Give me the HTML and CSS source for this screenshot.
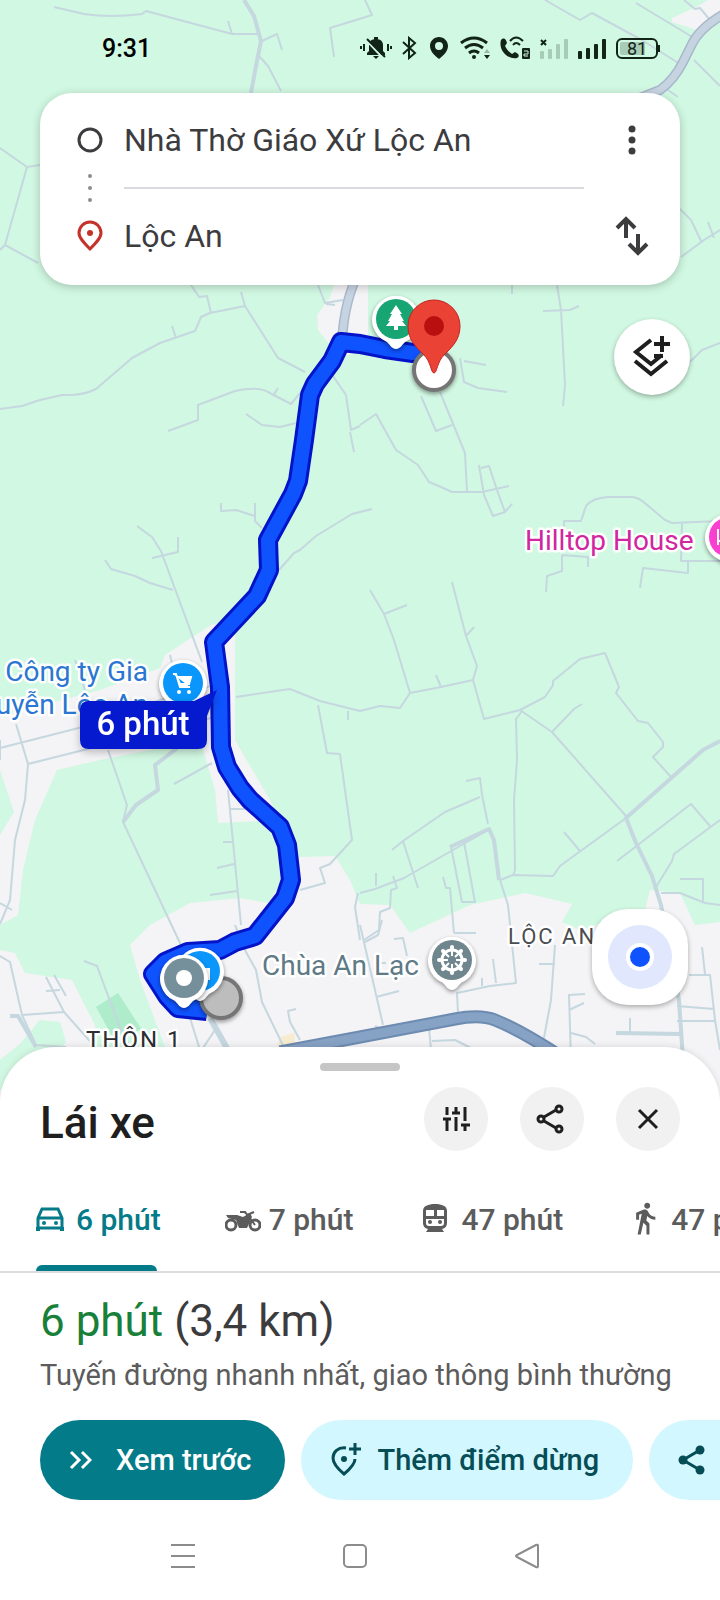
FILE: index.html
```html
<!DOCTYPE html>
<html lang="vi">
<head>
    <meta charset="UTF-8" />
    <meta name="viewport" content="width=device-width, initial-scale=1" />
    <title>Lái xe đến Lộc An</title>
    <link rel="stylesheet" href="styles.css">
</head>
<body>
<div class="app">
    <svg class="map" viewBox="0 0 720 1110" role="img" aria-label="Bản đồ tuyến đường">
        <defs>
            <path id="pin" d="M0 30C-4 30-6 26-9 23A24 24 0 1 1 9 23C6 26 4 30 0 30Z" />
        </defs>
        <rect class="land" width="720" height="1110" />

        <!-- built-up areas -->
        <g class="urban">
            <path d="M672 18L700 5 708 0H720V20L700 31 672 22Z" />
            <path d="M336 280L330 297 317 315 318 330 330 345 340 356 368 352V280Z" />
            <path d="M211 625L165 655 160 668 100 690 0 716V770L14 812 0 835V925L18 915 23 870 35 820 57 770 100 760 200 740 215 790 218 823 280 820 270 800 235 740V620Z" />
            <path d="M0 950L15 953 25 973 72 980 95 1025 104 1110H0Z" />
            <path d="M130 945L150 925 190 903 240 898 268 903 298 857 335 856 350 880 360 904 390 905 410 933 470 905 525 893 572 904 562 922 580 930 645 910 650 890 680 893 695 925 720 922V1110H175L165 1047 140 980Z" />
        </g>
        <path class="land" d="M20 1044L40 1020 60 1022 66 1042 50 1060 0 1090V1060Z" />
        <path class="park" d="M96 1007L118 993 142 1030 112 1036Z" />
        <path class="square" d="M280 1037L294 1033 296 1050H276Z" />

        <!-- small roads -->
        <g class="road">
            <path d="M54 7L84 14Q110 18 142 14L146 11 232 34 258 34M228 21L232 34M262 41L277 34 282 50M259 56L268 66 281 91M334 57L330 28 372 15 365 0" />
            <path d="M0 148L27 167 40 165M27 167L5 245 38 263M5 245L0 250" />
            <path d="M545 0L580 20 592 13 640 39 680 64M636 3L694 38M694 60L720 86M684 0L695 9 700 8 710 20M665 88L678 97M678 207L691 220 702 243M681 257L704 240 720 230M708 222L714 238" />
            <path d="M191 285L199 297 207 296 211 313M241 292L245 306 210 313 201 317 195 331 160 343 132 358 96 389Q82 396 62 395L40 400 22 406 0 409M172 326L176 338M245 306L278 358 305 372M318 285L325 303 343 300M326 304L335 305" />
            <path d="M168 431L198 420V405L235 391Q258 386 268 392L291 404 300 393M278 388L273 396M246 414L262 425 280 427 296 423M333 376L346 395 351 430 360 426M350 432L354 452" />
            <path d="M221 503V511L236 510 255 516M255 503V521L262 528M279 570L294 553 300 550 316 536 352 514 372 509M137 526L152 537 161 551 202 662M152 558L178 552V537M105 560L111 569 135 576 150 583 173 590" />
            <path d="M557 285L561 310 565 385 563 406M543 311L570 310 579 306M512 285V294M460 358L464 382 478 388 507 392M464 361L486 365M421 396L436 431 452 425M440 392L465 453 467 492M360 425L376 414 396 450 418 465 429 482 441 487 452 492 482 492 509 486M479 465L484 495 493 516 505 512 497 490 489 466 481 468M505 512L512 504" />
            <path d="M564 535V521H581L586 506Q592 498 608 497H632Q640 498 646 504L665 520 672 523 720 521M682 523L681 561H720M562 555V571L547 576 546 592M562 555L588 557V567M688 562V573L643 568 640 588M690 362L702 350 720 343" />
            <path d="M370 590L384 614 394 640 410 693 400 708 380 706 360 711 320 701 290 689 236 697M384 614L407 605M452 582L466 636 477 666 473 680 484 719 520 710M466 636L474 627M436 675L441 687 473 680M410 693L441 687M520 710L545 697 553 685V681L580 659 605 653 619 687 616 693 638 721 648 723 663 742V747L653 757 671 777M522 711L516 719 517 760 514 800 515 870 513 876M520 710L552 732 626 816M552 732L574 709 582 704" />
            <path d="M626 818L560 866 553 876 513 875 500 880M564 832L580 851M617 861L691 804 710 826M720 820L674 854 672 861 656 887M661 893L680 893 705 903 720 905M680 879H703V902" />
            <path d="M466 781L480 778 482 795 488 824M360 893L375 889 404 878 488 830M392 850L403 841 445 812 480 797M403 841L418 888M376 873V886M393 876L397 888 391 890 390 908 380 912 379 930 364 940M443 877L446 888H450L454 933M451 847L462 902H475L464 842M454 933H476M500 880L508 905 516 983 490 986 457 993 458 1014" />
            <path d="M318 705L327 753 340 754 352 840 330 864 320 868 325 883 300 890M348 711V720M358 893L355 907 360 940M228 790L241 925M229 809H246M223 842H232M217 868L234 864M210 895L237 891" />
            <path d="M0 748L110 720 160 700 215 685M28 764L215 717M16 724L28 764 25 800 15 840 10 900 0 924M108 750L127 805 123 822 180 943 200 990M174 784L212 763M0 740V760M0 903L12 910M163 678L200 670M170 655L174 672M75 660L85 690" />
            <path d="M84 961L97 966 120 1028 165 1110M0 956L10 962 22 1015 36 1045 66 1047M22 1015L64 1012M64 1012L46 977M66 996L54 975M60 990L46 991M64 1012L95 1047M235 925L246 952 256 970 262 1002 290 1060M296 1009L288 1011 290 1022 300 1040M190 1018L200 1050M203 1048L215 1030" />
            <path d="M360 925L383 1025M365 942L378 935 382 920M376 997L399 991M383 1030L375 1026M394 939L403 938 407 956M380 963H386M493 959L496 983M482 978V986M555 945L551 1000 543 1043M539 964H555M429 1028L432 1060M432 1041L455 1040 475 1050M571 1060L569 995 585 994M569 1010L584 1003M571 1033L586 1037 595 1044M702 947L705 974M689 975H710L715 1020 720 1050M677 1006L714 1009M677 1021H716M630 1018V1033" />
        </g>
        <g class="road wide">
            <path d="M720 741L703 750 626 818 636 843 652 876 661 905 672 960 679 1000 683 1060M616 1033L680 1034M450 847L489 829 494 840 499 880M180 746L155 765 158 790 136 805 123 822M244 0L254 16 261 41 256 66 251 93M10 1016L18 1016 36 1047" />
            <path d="M210 1018L228 1050" stroke-width="6" />
        </g>
        <g fill="none">
            <path class="street-edge" d="M724 14Q700 28 692 44L683 62Q674 80 660 90L640 98M360 270Q344 300 342 342" />
            <path class="street" d="M724 14Q700 28 692 44L683 62Q674 80 660 90L640 98M360 270Q344 300 342 342" />
            <path class="highway-edge" d="M280 1052L360 1037 455 1019Q480 1014 495 1020 520 1030 560 1056" />
            <path class="highway" d="M280 1052L360 1037 455 1019Q480 1014 495 1020 520 1030 560 1056" />
        </g>

        <!-- places under the route callout -->
        <g class="place shop">
            <text x="148" y="681" text-anchor="end">Công ty Gia</text>
            <text x="148" y="714" text-anchor="end">Nguyễn Lộc An</text>
        </g>

        <!-- route -->
        <path class="route-edge" d="M430 354L413 353 385 349 360 344 341 342 332 361 315 384 310 395 304 440 298 481 293 494 268 540 269 570 257 596 214 642 220 687 221 747 227 767 240 788 250 800 280 827 287 845 291 880 285 898 255 936 235 942 220 950 188 952 165 962 153 974 167 996 178 1008 207 1011" />
        <path class="route" d="M430 354L413 353 385 349 360 344 341 342 332 361 315 384 310 395 304 440 298 481 293 494 268 540 269 570 257 596 214 642 220 687 221 747 227 767 240 788 250 800 280 827 287 845 291 880 285 898 255 936 235 942 220 950 188 952 165 962 153 974 167 996 178 1008 207 1011" />
        <path d="M188 952L165 962 153 974 167 996 178 1008 207 1011 222 950Z" fill="#0f53ff" />

        <!-- pins -->
        <g class="pin" transform="translate(183 683)">
            <use href="#pin" />
            <circle r="20" fill="#0b96fb" />
            <path d="M-10-9H-7L-3 4H7M-6-6H8L6 1H-3Z" fill="#fff" stroke="#fff" stroke-width="2" />
            <circle cx="-4" cy="9" r="2" fill="#fff" /><circle cx="6" cy="9" r="2" fill="#fff" />
        </g>
        <circle class="stop start" cx="221" cy="998" r="20" />
        <g class="pin" transform="translate(200 971)">
            <use href="#pin" />
            <circle r="20" fill="#0b96fb" />
            <rect x="2" y="-3" width="8" height="12" fill="#fff" />
        </g>
        <g class="pin" transform="translate(184 978)">
            <use href="#pin" />
            <circle r="20" fill="#758f9b" />
            <circle r="8" fill="#fff" />
        </g>
        <g class="pin" transform="translate(396 319)">
            <use href="#pin" />
            <circle r="20" fill="#18a574" />
            <path d="M0-14L6-5H4L8 2H6L10 7H2V11H-2V7H-10L-6 2H-8L-4-5H-6Z" fill="#fff" />
        </g>
        <circle class="stop" cx="434" cy="370" r="20" />
        <path class="marker" d="M434 373C431 373 431 362 424 355 416 347 408 340 408 326A26 26 0 0 1 460 326C460 340 452 347 444 355 437 362 437 373 434 373Z" />
        <circle cx="434" cy="326" r="10" fill="#b9100f" />
        <g class="pin" transform="translate(452 960)">
            <use href="#pin" />
            <circle r="20" fill="#70868f" />
            <g fill="none" stroke="#fff">
                <circle r="10" stroke-width="3" />
                <path d="M0-14V-4M0 14V4M-14 0H-4M14 0H4M-10-10L-3-3M10 10L3 3M10-10L3-3M-10 10L-3 3" stroke-width="2" />
                <path d="M0-13V-12M0 13V12M-13 0H-12M13 0H12M-9-9L-8-8M9 9L8 8M9-9L8-8M-9 9L-8 8" stroke-width="4" stroke-linecap="round" />
            </g>
        </g>
        <g class="pin" transform="translate(729 537)">
            <use href="#pin" />
            <circle r="20" fill="#f83fcf" />
            <path d="M-11-8V8M-11 4H10M-6-2H0" stroke="#fff" stroke-width="2" />
        </g>

        <g class="place">
            <text class="hotel" x="525" y="550">Hilltop House</text>
            <text class="temple" x="262" y="975">Chùa An Lạc</text>
            <text class="area" x="508" y="944">LỘC AN</text>
            <text class="area dark" x="86" y="1048">THÔN 1</text>
        </g>

        <g class="callout">
            <path d="M89 701H194L217 690 207 716V740Q207 749 198 749H89Q80 749 80 740V710Q80 701 89 701Z" />
            <text x="143" y="735" text-anchor="middle">6 phút</text>
        </g>
    </svg>

    <header class="status-bar">
        <time>9:31</time>
        <div class="status-icons">
            <svg width="32" height="24" viewBox="0 0 32 24"><path d="M7 19V17L9 15V9C9 5 12 3 16 3S23 5 23 9V15L25 17V19Z" /><path d="M14 1H18V3H14ZM13 20H19L16 23Z" /><path d="M6 4L23 22" stroke="#d1f8e2" stroke-width="2" /><path d="M7 3L25 21M1 10V13M4 8V15M28 8V15M31 10V13" stroke="#122318" stroke-width="2" /></svg>
            <svg width="16" height="24" viewBox="0 0 16 24"><path d="M1 6L13 17 7 22V2L13 7 1 18" fill="none" stroke="#122318" stroke-width="2" /></svg>
            <svg width="22" height="24" viewBox="0 0 22 24"><path fill-rule="evenodd" d="M11 1C6 1 2 5 2 10 2 15 6 19 11 23 16 19 20 15 20 10 20 5 16 1 11 1ZM11 6A4 4 0 1 1 11 14 4 4 0 0 1 11 6Z" /></svg>
            <svg width="30" height="24" viewBox="0 0 30 24"><g fill="none" stroke="#122318" stroke-width="3"><path d="M1 7Q14-3 27 7M5 12Q14 5 23 12M9 17Q14 13 19 17" /></g><circle cx="14" cy="21" r="2" /><path d="M24 19H30L27 23Z" /><path d="M24 17H30L27 13Z" opacity=".3" /></svg>
            <svg width="30" height="24" viewBox="0 0 30 24"><path d="M1 4C4 1 6 3 7 7L5 10C7 14 9 16 12 18L15 16C19 18 20 20 17 22 8 24-2 14 1 4Z" /><path d="M10 5Q16-2 23 5M13 9Q16 5 20 9" fill="none" stroke="#122318" stroke-width="2" /><rect x="22" y="12" width="8" height="11" rx="1" /><path d="M24 15H28V18H24V20H28" fill="none" stroke="#d1f8e2" /></svg>
            <svg width="28" height="24" viewBox="0 0 28 24"><g fill="#a7ccb6"><rect y="15" width="4" height="8" rx="1" /><rect x="8" y="13" width="4" height="10" rx="1" /><rect x="16" y="8" width="4" height="15" rx="1" /><rect x="24" y="3" width="4" height="20" rx="1" /></g><path d="M1 4L6 9M6 4L1 9" stroke="#122318" stroke-width="2" /></svg>
            <svg width="28" height="24" viewBox="0 0 28 24"><rect y="15" width="4" height="8" rx="1" /><rect x="8" y="12" width="4" height="11" rx="1" /><rect x="16" y="8" width="4" height="15" rx="1" /><rect x="24" y="3" width="4" height="20" rx="1" /></svg>
            <span class="battery">81</span>
        </div>
    </header>

    <form class="route-card">
        <svg class="row-icon" width="28" height="32" viewBox="0 0 28 32"><circle cx="14" cy="16" r="11" fill="none" stroke="#3c3c3f" stroke-width="3" /></svg>
        <input type="text" aria-label="Điểm xuất phát" value="Nhà Thờ Giáo Xứ Lộc An">
        <button type="button" class="plain" aria-label="Tùy chọn khác">
            <svg width="40" height="40" viewBox="0 0 40 40" fill="#3c3c3f"><circle cx="20" cy="9" r="3.500" /><circle cx="20" cy="20" r="3.500" /><circle cx="20" cy="31" r="3.500" /></svg>
        </button>
        <svg class="dots" width="28" height="30" viewBox="0 0 28 30" fill="#8a8d91"><circle cx="14" cy="3" r="2" /><circle cx="14" cy="15" r="2" /><circle cx="14" cy="27" r="2" /></svg>
        <hr>
        <svg class="row-icon" width="28" height="32" viewBox="0 0 28 32"><path d="M14 29C8 23 3 18 3 13A11 11 0 0 1 25 13C25 18 20 23 14 29Z" fill="none" stroke="#c5322a" stroke-width="3" /><circle cx="14" cy="13" r="3" fill="#c5322a" /></svg>
        <input type="text" aria-label="Điểm đến" value="Lộc An">
        <button type="button" class="plain" aria-label="Đảo chiều">
            <svg width="40" height="40" viewBox="0 0 40 40" fill="none" stroke="#3c3c3f" stroke-width="4"><path d="M14 22V4M5 12L14 3 23 12M26 18V36M17 28L26 37 35 28" /></svg>
        </button>
    </form>

    <button class="layers" aria-label="Lớp bản đồ">
        <svg width="44" height="44" viewBox="0 0 44 44" fill="none" stroke="#1f1f1f" stroke-width="4"><path d="M21 5L6 17 21 29 32 20M24 21H33M5 26L21 39 37 26M32 1V17M24 9H40" /></svg>
    </button>

    <button class="locate" aria-label="Vị trí của tôi"><span class="halo"><span class="dot"></span></span></button>

    <main class="sheet">
        <div class="handle"></div>
        <div class="sheet-head">
            <h1>Lái xe</h1>
            <button class="round" aria-label="Tùy chọn tuyến đường">
                <svg width="32" height="32" viewBox="0 0 32 32" fill="none" stroke="#1f1f1f" stroke-width="3"><path d="M7 4V12M3 16H11M7 16V28M16 4V10M12 10H20M16 14V28M25 4V18M21 22H30M25 22V28" /></svg>
            </button>
            <button class="round" aria-label="Chia sẻ">
                <svg width="32" height="32" viewBox="0 0 32 32" fill="none" stroke="#1f1f1f" stroke-width="3"><circle cx="5" cy="16" r="3" /><circle cx="23" cy="6" r="3" /><circle cx="23" cy="26" r="3" /><path d="M8 14L20 7M8 18L20 25" /></svg>
            </button>
            <button class="round" aria-label="Đóng">
                <svg width="32" height="32" viewBox="0 0 32 32" fill="none" stroke="#1f1f1f" stroke-width="3"><path d="M7 7L25 25M25 7L7 25" /></svg>
            </button>
        </div>

        <nav class="modes">
            <a href="#car" class="active">
                <svg width="36" height="32" viewBox="0 0 36 32" fill="none" stroke="currentColor" stroke-width="3"><path d="M6 15L10 6H26L30 15V25H6ZM6 15H30" /><path d="M6 24V28M30 24V28" stroke-width="4" /><circle cx="12" cy="20" r="2" fill="currentColor" stroke="none" /><circle cx="24" cy="20" r="2" fill="currentColor" stroke="none" /></svg>
                6 phút
            </a>
            <a href="#motorbike">
                <svg width="36" height="32" viewBox="0 0 36 32" fill="none" stroke="currentColor" stroke-width="3"><circle cx="6" cy="22" r="5" /><circle cx="30" cy="22" r="5" /><path d="M1 12H12L18 14 25 10 27 14 22 25H14L11 17 3 15ZM15 8H20L23 12" fill="currentColor" stroke="none" /><path d="M15 9H20L30 22M22 12L29 9" stroke-width="2" /></svg>
                7 phút
            </a>
            <a href="#transit">
                <svg width="36" height="32" viewBox="0 0 36 32" fill="currentColor"><path fill-rule="evenodd" d="M6 8C6 3 11 1 18 1S30 3 30 8V20Q30 25 25 26L27 29H9L11 26Q6 25 6 20ZM9 7V13H17V7ZM20 7V13H27V7ZM9 16V20Q9 23 12 23H24Q27 23 27 20V16Z" /><circle cx="13" cy="19" r="2" /><circle cx="23" cy="19" r="2" /></svg>
                47 phút
            </a>
            <a href="#walk">
                <svg width="36" height="34" viewBox="0 0 24 23" fill="currentColor"><path d="M13.500 4.500c1.100 0 2-.9 2-2s-.9-2-2-2-2 .9-2 2 .9 2 2 2zM9.800 7.900L7 22h2.100l1.800-8 2.100 2v6h2v-7.500l-2.100-2 .6-3C14.800 11 16.800 12 19 12v-2c-1.900 0-3.500-1-4.300-2.400l-1-1.600c-.4-.6-1-1-1.700-1-.3 0-.5.100-.8.100L6 7.300V12h2V8.600l1.800-.7" /></svg>
                47 phút
            </a>
        </nav>

        <section class="summary">
            <h2><span>6 phút</span> (3,4 km)</h2>
            <p>Tuyến đường nhanh nhất, giao thông bình thường</p>
        </section>

        <div class="actions">
            <button class="primary">
                <svg width="24" height="32" viewBox="0 0 24 32" fill="none" stroke="currentColor" stroke-width="3"><path d="M3 8L11 16 3 24M14 8L22 16 14 24" /></svg>
                Xem trước
            </button>
            <button>
                <svg width="32" height="36" viewBox="0 0 32 36" fill="none" stroke="currentColor" stroke-width="3"><path d="M17 6C9 5 4 10 4 16 4 22 9 27 15 32 21 27 26 22 26 17M26 1V13M20 7H32" /><circle cx="15" cy="17" r="3" fill="currentColor" stroke="none" /></svg>
                Thêm điểm dừng
            </button>
            <button>
                <svg width="32" height="32" viewBox="0 0 32 32" fill="currentColor"><circle cx="6" cy="16" r="4.500" /><circle cx="23" cy="6" r="4.500" /><circle cx="23" cy="26" r="4.500" /><path d="M23 6L6 16 23 26" fill="none" stroke="currentColor" stroke-width="3" /></svg>
                Chia sẻ
            </button>
        </div>

        <footer class="nav-bar">
            <button class="plain" aria-label="Ứng dụng gần đây"><svg width="28" height="28" viewBox="0 0 28 28"><path d="M2 3H26M2 14H26M2 25H26" /></svg></button>
            <button class="plain" aria-label="Màn hình chính"><svg width="28" height="28" viewBox="0 0 28 28"><rect x="3" y="3" width="22" height="22" rx="4" /></svg></button>
            <button class="plain" aria-label="Quay lại"><svg width="28" height="28" viewBox="0 0 28 28"><path d="M23 3Q25 2 25 4V24Q25 26 23 25L4 15Q2 14 4 13Z" /></svg></button>
        </footer>
    </main>
</div>
</body>
</html>
```
FILE: styles.css
```css
* {
    box-sizing: border-box;
}
body {
    margin: 0;
    font-family: Roboto, "Liberation Sans", sans-serif;
    color: #1f1f1f;
    background: #fff;
}
button {
    border: none;
    padding: 0;
    font-family: inherit;
    color: inherit;
    cursor: pointer;
}
svg {
    flex: none;
}
.app {
    position: relative;
    display: flex;
    flex-direction: column;
    min-height: 100vh;
    overflow: hidden;
}

/* map */
.map {
    position: absolute;
    top: 0;
    left: 0;
    width: 100%;
}
.land { fill: #d1f8e2; }
.urban { fill: #f4f3f5; }
.park { fill: #aeeccb; }
.square { fill: #f8ecd0; }
.road {
    fill: none;
    stroke: #c5d7df;
    stroke-width: 2;
    stroke-linejoin: round;
}
.road.wide { stroke-width: 4; }
.street-edge { stroke: #a9b9cb; stroke-width: 10; }
.street { stroke: #c6d3e1; stroke-width: 7; }
.highway-edge { stroke: #6d8bb0; stroke-width: 13; }
.highway { stroke: #86a2c4; stroke-width: 9; }
.route-edge,
.route {
    stroke-linejoin: round;
    fill: none;
}
.route-edge { stroke: #0213c8; stroke-width: 20; }
.route { stroke: #0f53ff; stroke-width: 14; }
.pin use {
    fill: #fff;
    filter: drop-shadow(0 2px 2px rgba(0,0,0,0.4));
}
.stop {
    fill: #fff;
    stroke: #757575;
    stroke-width: 4;
    filter: drop-shadow(0 2px 2px rgba(0,0,0,0.4));
}
.stop.start { fill: #bdbdbd; }
.marker {
    fill: #ea4335;
    stroke: #c5221f;
}
.place text {
    font-size: 28px;
    paint-order: stroke;
    stroke: #fff;
    stroke-width: 5px;
    stroke-linejoin: round;
}
.shop { fill: #2a76d2; }
.hotel { fill: #d026a0; }
.temple { fill: #5e7a86; }
.place .area {
    font-size: 22px;
    letter-spacing: 2px;
    fill: #4a4d50;
}
.place .dark {
    font-size: 24px;
    fill: #2c2e30;
}
.callout {
    fill: #0519cf;
    filter: drop-shadow(0 3px 4px rgba(0,0,0,0.25));
}
.callout text {
    font-size: 33px;
    font-weight: 500;
    fill: #fff;
}

/* status bar */
.status-bar {
    position: relative;
    display: flex;
    justify-content: space-between;
    align-items: center;
    height: 93px;
    padding: 3px 60px 0 102px;
    color: #000;
}
.status-bar time {
    font-size: 25px;
    font-weight: 500;
}
.status-icons {
    display: flex;
    align-items: center;
    gap: 10px;
    fill: #122318;
}
.battery {
    position: relative;
    width: 42px;
    height: 21px;
    margin-right: 2px;
    border: 2px solid #122318;
    border-radius: 6px;
    background: linear-gradient(90deg, #a8ccb7 75%, transparent 75%) content-box;
    padding: 2px;
    color: #122318;
    font-size: 18px;
    line-height: 14px;
    text-align: center;
}
.battery::after {
    content: "";
    position: absolute;
    right: -4px;
    top: 5px;
    width: 2px;
    height: 7px;
    background: #122318;
}

/* start and destination */
.route-card {
    position: relative;
    display: grid;
    grid-template-columns: 36px 28px 20px 1fr 96px;
    grid-template-rows: 94px 2px 94px;
    align-items: center;
    margin: 0 40px;
    padding-bottom: 2px;
    border-radius: 32px;
    background: #fff;
    box-shadow: 0 2px 10px rgba(0,0,0,0.22);
}
.route-card .row-icon,
.route-card .dots {
    grid-column: 2;
}
.route-card .dots {
    grid-row: 2;
}
.route-card input {
    grid-column: 4;
    width: 100%;
    border: none;
    padding: 0;
    outline: none;
    background: none;
    font-family: inherit;
    font-size: 32px;
    color: #3c3c3f;
}
.route-card hr {
    grid-column: 4;
    grid-row: 2;
    width: 100%;
    height: 2px;
    margin: 0;
    border: none;
    background: #d8dadd;
}
.plain {
    display: flex;
    justify-content: center;
    background: none;
}

/* floating buttons */
.layers,
.locate {
    position: relative;
    display: flex;
    align-items: center;
    justify-content: center;
    align-self: flex-end;
    background: #fff;
    box-shadow: 0 2px 5px rgba(0,0,0,0.3);
}
.layers {
    width: 76px;
    height: 76px;
    margin: 34px 30px 32px 0;
    border-radius: 50%;
}
.locate {
    width: 96px;
    height: 96px;
    margin: auto 32px 42px 0;
    border-radius: 36px;
}
.halo {
    display: flex;
    align-items: center;
    justify-content: center;
    width: 64px;
    height: 64px;
    border-radius: 50%;
    background: #e1e8fe;
}
.dot {
    width: 28px;
    height: 28px;
    border: 4px solid #fff;
    border-radius: 50%;
    background: #0f53ff;
}

/* bottom sheet */
.sheet {
    position: relative;
    padding-top: 16px;
    border-radius: 56px 56px 0 0;
    background: #fff;
    box-shadow: 0 -1px 6px rgba(0,0,0,0.1);
}
.handle {
    width: 80px;
    height: 8px;
    margin: 0 auto 16px;
    border-radius: 4px;
    background: #c6c6c6;
}
.sheet-head {
    display: flex;
    align-items: center;
    gap: 32px;
    padding: 0 40px;
}
h1 {
    flex: 1;
    margin: 0;
    padding-top: 8px;
    font-size: 44px;
    font-weight: 500;
    line-height: 56px;
}
.round {
    display: flex;
    align-items: center;
    justify-content: center;
    width: 64px;
    height: 64px;
    border-radius: 50%;
    background: #f1f1f1;
}
.modes {
    display: flex;
    gap: 64px;
    height: 122px;
    padding: 0 32px;
    border-bottom: 2px solid #dadcdf;
    overflow: hidden;
}
.modes a {
    position: relative;
    flex: none;
    display: flex;
    align-items: center;
    gap: 8px;
    padding-top: 16px;
    font-size: 30px;
    font-weight: 500;
    color: #5c5c5c;
    text-decoration: none;
}
.modes .active {
    color: #047b88;
}
.modes .active::after {
    content: "";
    position: absolute;
    left: 4px;
    right: 4px;
    bottom: 0;
    height: 6px;
    border-radius: 6px 6px 0 0;
    background: #047b88;
}
.summary {
    padding: 23px 40px 0;
}
.summary h2 {
    margin: 0;
    font-size: 44px;
    font-weight: 400;
    line-height: 50px;
    color: #3c3c3f;
}
.summary h2 span {
    color: #188038;
}
.summary p {
    margin: 10px 0 26px;
    font-size: 29px;
    line-height: 38px;
    color: #5c5c5c;
    white-space: nowrap;
}
.actions {
    display: flex;
    gap: 16px;
    padding-left: 40px;
    overflow: hidden;
}
.actions button {
    flex: none;
    display: flex;
    align-items: center;
    gap: 16px;
    height: 80px;
    padding: 0 34px 0 28px;
    border-radius: 40px;
    background: #d2f7fe;
    color: #064d56;
    font-size: 29px;
    font-weight: 500;
}
.actions .primary {
    gap: 24px;
    background: #047b88;
    color: #fff;
}
.nav-bar {
    display: flex;
    justify-content: center;
    gap: 144px;
    padding: 42px 10px 30px 0;
    fill: none;
    stroke: #8c8c8c;
    stroke-width: 2;
}
```
